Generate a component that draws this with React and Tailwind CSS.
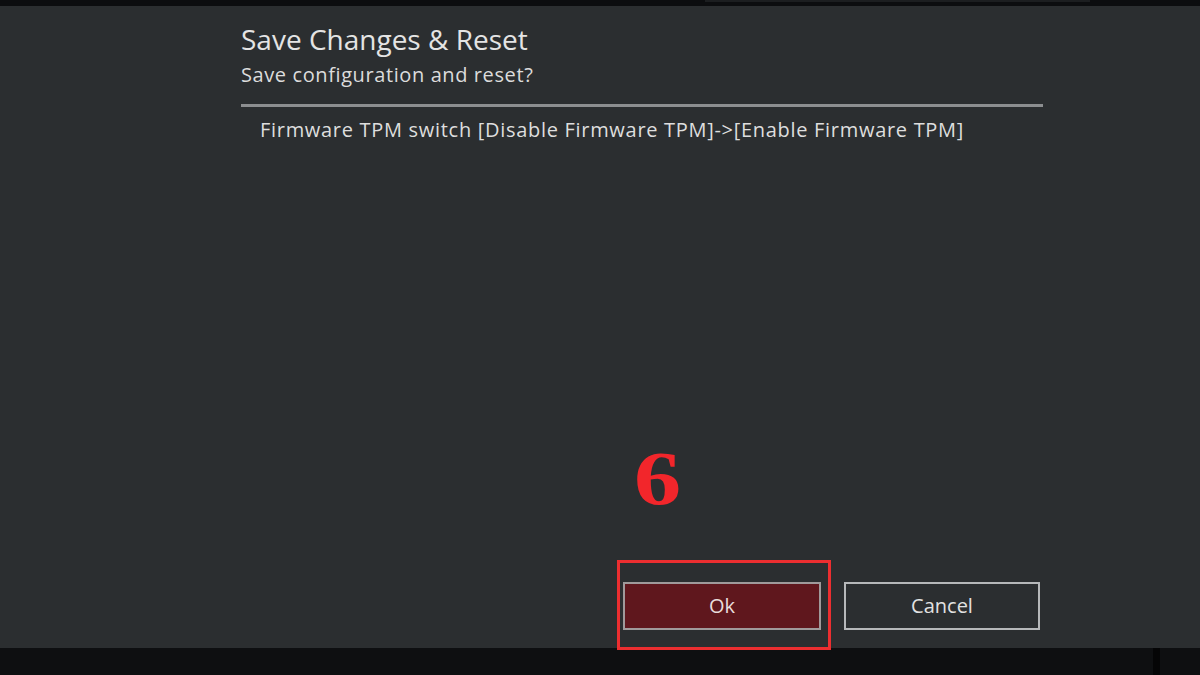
import React from 'react';

const App = () => {
    return (
        <div className="w-[1200px] h-[675px] flex flex-col bg-[#0e0f11] overflow-hidden" style={{ fontFamily: '"Open Sans", "Noto Sans", sans-serif' }}>
            {/* top strip */}
            <div className="h-[6px] bg-[#0c0d0f] flex">
                <div className="ml-[705px] w-[385px] h-[2px] bg-[#1c1e20]"></div>
            </div>

            {/* dialog body */}
            <div className="h-[642px] bg-[#2b2e30] flex flex-col pl-[241px] pr-[157px]">
                <h1 className="mt-[16px] text-[28px] leading-[34px] text-[#e4e4e4]">Save Changes &amp; Reset</h1>
                <p className="mt-[6px] text-[20px] leading-[26px] tracking-[0.6px] text-[#dcdcdc]">Save configuration and reset?</p>
                <div className="mt-[16px] h-[3px] bg-[#8c8e90]"></div>
                <p className="mt-[10px] pl-[19px] text-[20px] leading-[26px] tracking-[0.7px] text-[#dedede]">
                    Firmware TPM switch [Disable Firmware TPM]-&gt;[Enable Firmware TPM]
                </p>

                <div className="flex-1"></div>

                {/* annotation number */}
                <div className="ml-[393px] text-[76px] leading-none font-bold text-[#f2262b] origin-left scale-x-[1.24]" style={{ fontFamily: '"Liberation Serif", serif' }}>6</div>

                <div className="mt-[66px] mb-[18px] ml-[382px] flex gap-[23px]">
                    <div className="relative">
                        <button className="w-[198px] h-[48px] bg-[#5f171d] border-2 border-[#a09a9b] text-[20px] text-[#e8dcdc]">Ok</button>
                        <div className="absolute -left-[6px] -right-[10px] -top-[22px] -bottom-[20px] border-[3px] border-[#ec2e30]"></div>
                    </div>
                    <button className="w-[196px] h-[48px] bg-[#2b2e30] border-2 border-[#b6b8ba] text-[20px] text-[#e2e2e2]">Cancel</button>
                </div>
            </div>

            {/* bottom strip */}
            <div className="flex-1 bg-[#0e0f11] flex">
                <div className="ml-[1153px] w-[7px] bg-[#050506]"></div>
            </div>
        </div>
    );
};

export default App;
